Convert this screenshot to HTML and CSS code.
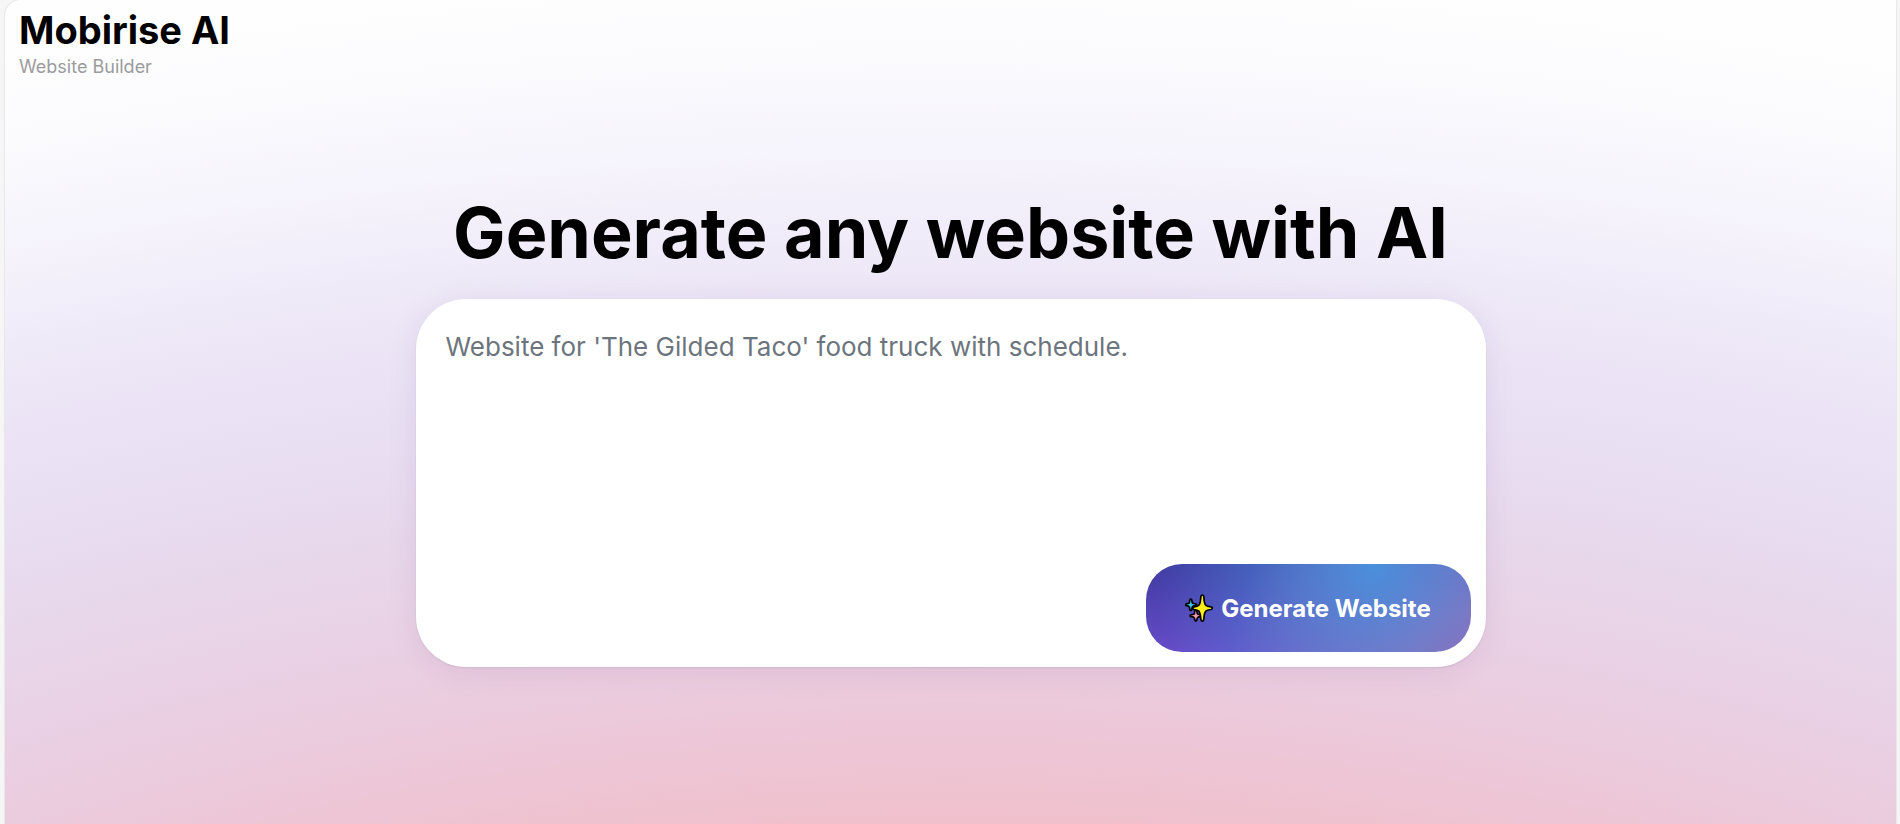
FILE: index.html
```html
<!DOCTYPE html>
<html lang="en">
<head>
  <meta charset="utf-8">
  <meta name="viewport" content="width=device-width, initial-scale=1">
  <title>Mobirise AI Website Builder</title>
  <link rel="stylesheet" href="styles.css">
</head>
<body>
  <div class="page">
    <header class="brand">
      <div class="brand-name">Mobirise AI</div>
      <div class="brand-tagline">Website Builder</div>
    </header>
    <main class="hero">
      <h1 class="hero-title">Generate any website with AI</h1>
      <form class="prompt">
        <textarea class="prompt-input" aria-label="Describe your website" placeholder="Website for 'The Gilded Taco' food truck with schedule."></textarea>
        <button class="prompt-button" type="button">
          <svg class="sparkles" viewBox="0 0 28 28" aria-hidden="true">
            <g stroke="#000" stroke-width="1.7" stroke-linejoin="round">
              <path fill="#3fc4dc" d="M5.8 5q.9 0 1 1.200q.2 2.500 1 3q.6.500 2.700.7q1 .2 1 .9t-1 .9q-2.100.2-2.700.7q-.8.600-1 3q-.1 1.100-1 1.100t-1-1.100q-.2-2.400-1-3q-.6-.5-2.200-.7q-1-.2-1-.9t1-.9q1.600-.2 2.200-.7q.8-.5 1-3q.1-1.200 1-1.200z"/>
              <path fill="#f79aae" d="M10.800 16q.9 0 1 1.200q.2 2.500 1 3q.6.500 2.700.7q1 .2 1 .9t-1 .9q-2.100.2-2.700.7q-.8.500-1 2.500q-.1 1.100-1 1.100t-1-1.100q-.2-2-1-2.500q-.6-.5-2.700-.7q-1-.2-1-.9t1-.9q2.100-.2 2.700-.7q.8-.5 1-3q.1-1.200 1-1.200z"/>
              <path fill="#ffee1a" d="M17.300 1q1.300 0 1.500 2.200q.4 6.200 1.900 8q1.200 1.300 5.200 1.700q1.400.2 1.400 1.300t-1.400 1.300q-4 .4-5.200 1.700q-1.500 1.800-1.900 7.800q-.2 2.100-1.500 2.100t-1.500-2.100q-.4-6-1.900-7.800q-1.200-1.300-4.700-1.700q-1.400-.2-1.400-1.300t1.400-1.300q3.500-.4 4.700-1.700q1.500-1.800 1.900-8q.2-2.200 1.500-2.200z"/>
            </g>
          </svg>
          <span>Generate Website</span>
        </button>
      </form>
    </main>
  </div>
</body>
</html>
```
FILE: styles.css
```css
* {
  box-sizing: border-box;
}

body {
  margin: 0;
  padding: 0 4px 0 5px;
  background: #f6f6f7;
  font-family: Inter, "Liberation Sans", sans-serif;
  color: #000;
}

.page {
  min-height: 100vh;
  display: flex;
  flex-direction: column;
  border-radius: 16px 0 0 0;
  box-shadow: 0 0 2px rgba(0, 0, 0, 0.2);
  background: radial-gradient(3000px 200vh at 50% 200%,
    #f0c0cc 50%,
    #ebcbde 59%,
    #e8d7eb 69%,
    #e9dff3 76%,
    #ede7f7 83%,
    #f6f4fc 91%,
    #fcfcfe 98%,
    #fefefe 102%);
}

.brand {
  padding: 8px 14px 0;
}

.brand-name {
  font-size: 38px;
  line-height: 44px;
  font-weight: 700;
}

.brand-tagline {
  font-size: 18px;
  line-height: 30px;
  color: #9b9b9d;
}

.hero {
  display: flex;
  flex-direction: column;
  align-items: center;
  padding: 107px 24px 24px;
}

.hero-title {
  margin: 0 0 22px;
  font-size: 70px;
  line-height: 88px;
  font-weight: 700;
  text-align: center;
}

.prompt {
  display: flex;
  flex-direction: column;
  align-items: flex-end;
  width: 100%;
  max-width: 1070px;
  padding: 15px;
  border-radius: 50px;
  background: #fff;
  box-shadow: 0 1px 2px rgba(0, 0, 0, 0.08), 0 4px 32px rgba(60, 30, 90, 0.08);
}

.prompt-input {
  width: 100%;
  height: 250px;
  padding: 13px 15px;
  border: 0;
  outline: 0;
  resize: none;
  background: transparent;
  font-family: inherit;
  font-size: 26px;
  line-height: 40px;
  color: #212529;
}

.prompt-input::placeholder {
  color: #6c757d;
  opacity: 1;
}

.prompt-button {
  display: flex;
  align-items: center;
  justify-content: center;
  gap: 8px;
  width: 325px;
  height: 88px;
  border: 0;
  border-radius: 36px;
  font-family: inherit;
  font-size: 24px;
  font-weight: 700;
  color: #fff;
  white-space: nowrap;
  cursor: pointer;
  background:
    radial-gradient(circle at 70% 0%, #4a90dc 0, rgba(74, 144, 220, 0.8) 40px, rgba(74, 144, 220, 0) 220px),
    radial-gradient(circle at 100% 120%, #b55aa6 0, #a862b0 60px, rgba(140, 110, 180, 0) 240px),
    linear-gradient(180deg, #403ba2, #664cc8);
}

.sparkles {
  flex: none;
  width: 28px;
  height: 28px;
}
```
